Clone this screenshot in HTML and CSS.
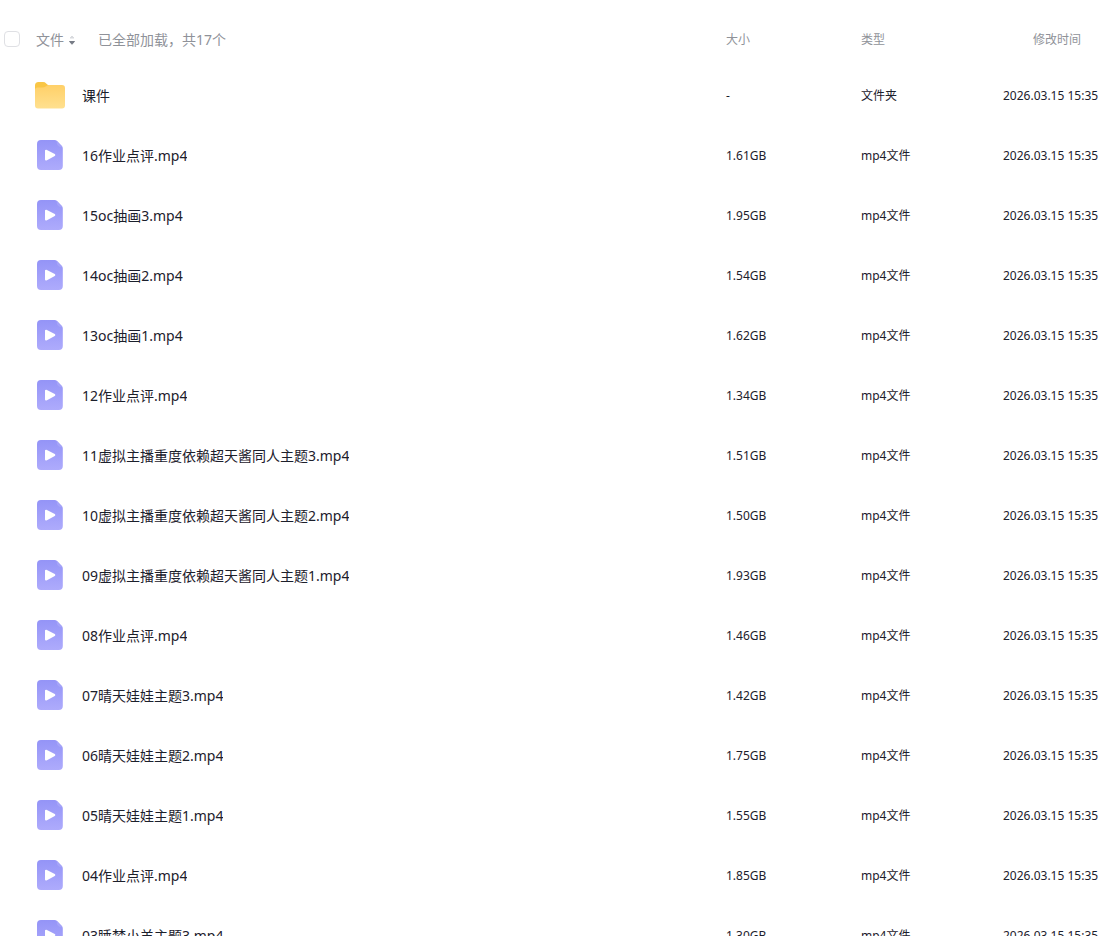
FILE: index.html
```
<!DOCTYPE html>
<html lang="zh-CN">
<head>
<meta charset="utf-8">
<title>文件</title>
<link rel="stylesheet" href="styles.css">
</head>
<body>
<svg width="0" height="0" class="sprites" aria-hidden="true">
  <defs>
    <linearGradient id="violet" x1="0" y1="0" x2="0" y2="1"><stop offset="0" stop-color="#9494f7"/><stop offset="1" stop-color="#aeabfc"/></linearGradient>
    <linearGradient id="amber" x1="0" y1="0" x2="0" y2="1"><stop offset="0" stop-color="#ffd068"/><stop offset="1" stop-color="#ffe08f"/></linearGradient>
    <symbol id="video" viewBox="0 0 30 32">
      <path d="M6 0h13.500q1.500 0 2.500 1l4.800 5q1 1 1 2.500V26a4 4 0 0 1-4 4H6a4 4 0 0 1-4-4V4a4 4 0 0 1 4-4z" fill="url(#violet)"/>
      <path d="M21.500 .6 26.800 6q.6.700.8 1.300-3.200 0-4.600-1.600T21.500 .6z" fill="#a5a4f8"/>
      <path d="M11 10.700v8.800L19.300 15z" fill="#fff" stroke="#fff" stroke-width="2" stroke-linejoin="round"/>
    </symbol>
    <symbol id="folder" viewBox="0 0 30 32">
      <path d="M0 13V5.500Q0 2 3.500 2H8q2 0 3.200 1.400T14.500 5.500V9z" fill="#f9c646"/>
      <path d="M0 10Q0 7.500 2.500 7.500H7q2.500 0 4-1.200T15 5h12q3 0 3 3v17.500q0 3-3 3H3q-3 0-3-3z" fill="url(#amber)"/>
    </symbol>
  </defs>
</svg>
<main class="list">
<table class="files">
<colgroup><col><col class="col-size"><col class="col-type"><col class="col-date"></colgroup>
<thead>
<tr>
<th scope="col"><div class="heading">
<input type="checkbox" class="check" aria-label="全选">
<button type="button" class="sort">文件<svg class="arrows" viewBox="0 0 8 12" aria-hidden="true"><path d="M2 4 4 2l2 2z" fill="#d8dade" stroke="#d8dade" stroke-linejoin="round"/><path d="M1.500 7.500h5L4 10.300z" fill="#777c86" stroke="#777c86" stroke-linejoin="round"/></svg></button>
<span>已全部加载，共17个</span>
</div></th>
<th scope="col">大小</th><th scope="col">类型</th><th scope="col" class="modified">修改时间</th>
</tr>
</thead>
<tbody>
<tr><td><div class="name"><svg class="icon" aria-hidden="true"><use href="#folder"/></svg><a href="#">课件</a></div></td><td>-</td><td>文件夹</td><td>2026.03.15 15:35</td></tr>
<tr><td><div class="name"><svg class="icon" aria-hidden="true"><use href="#video"/></svg><a href="#">16作业点评.mp4</a></div></td><td>1.61GB</td><td>mp4文件</td><td>2026.03.15 15:35</td></tr>
<tr><td><div class="name"><svg class="icon" aria-hidden="true"><use href="#video"/></svg><a href="#">15oc抽画3.mp4</a></div></td><td>1.95GB</td><td>mp4文件</td><td>2026.03.15 15:35</td></tr>
<tr><td><div class="name"><svg class="icon" aria-hidden="true"><use href="#video"/></svg><a href="#">14oc抽画2.mp4</a></div></td><td>1.54GB</td><td>mp4文件</td><td>2026.03.15 15:35</td></tr>
<tr><td><div class="name"><svg class="icon" aria-hidden="true"><use href="#video"/></svg><a href="#">13oc抽画1.mp4</a></div></td><td>1.62GB</td><td>mp4文件</td><td>2026.03.15 15:35</td></tr>
<tr><td><div class="name"><svg class="icon" aria-hidden="true"><use href="#video"/></svg><a href="#">12作业点评.mp4</a></div></td><td>1.34GB</td><td>mp4文件</td><td>2026.03.15 15:35</td></tr>
<tr><td><div class="name"><svg class="icon" aria-hidden="true"><use href="#video"/></svg><a href="#">11虚拟主播重度依赖超天酱同人主题3.mp4</a></div></td><td>1.51GB</td><td>mp4文件</td><td>2026.03.15 15:35</td></tr>
<tr><td><div class="name"><svg class="icon" aria-hidden="true"><use href="#video"/></svg><a href="#">10虚拟主播重度依赖超天酱同人主题2.mp4</a></div></td><td>1.50GB</td><td>mp4文件</td><td>2026.03.15 15:35</td></tr>
<tr><td><div class="name"><svg class="icon" aria-hidden="true"><use href="#video"/></svg><a href="#">09虚拟主播重度依赖超天酱同人主题1.mp4</a></div></td><td>1.93GB</td><td>mp4文件</td><td>2026.03.15 15:35</td></tr>
<tr><td><div class="name"><svg class="icon" aria-hidden="true"><use href="#video"/></svg><a href="#">08作业点评.mp4</a></div></td><td>1.46GB</td><td>mp4文件</td><td>2026.03.15 15:35</td></tr>
<tr><td><div class="name"><svg class="icon" aria-hidden="true"><use href="#video"/></svg><a href="#">07晴天娃娃主题3.mp4</a></div></td><td>1.42GB</td><td>mp4文件</td><td>2026.03.15 15:35</td></tr>
<tr><td><div class="name"><svg class="icon" aria-hidden="true"><use href="#video"/></svg><a href="#">06晴天娃娃主题2.mp4</a></div></td><td>1.75GB</td><td>mp4文件</td><td>2026.03.15 15:35</td></tr>
<tr><td><div class="name"><svg class="icon" aria-hidden="true"><use href="#video"/></svg><a href="#">05晴天娃娃主题1.mp4</a></div></td><td>1.55GB</td><td>mp4文件</td><td>2026.03.15 15:35</td></tr>
<tr><td><div class="name"><svg class="icon" aria-hidden="true"><use href="#video"/></svg><a href="#">04作业点评.mp4</a></div></td><td>1.85GB</td><td>mp4文件</td><td>2026.03.15 15:35</td></tr>
<tr><td><div class="name"><svg class="icon" aria-hidden="true"><use href="#video"/></svg><a href="#">03睡梦小羊主题3.mp4</a></div></td><td>1.30GB</td><td>mp4文件</td><td>2026.03.15 15:35</td></tr>
</tbody>
</table>
</main>
</body>
</html>
```
FILE: styles.css
```
* { box-sizing: border-box; }
body {
  margin: 0;
  background: #fff;
  color: #1c202c;
  font-family: "Noto Sans", "Noto Sans CJK SC", sans-serif;
  font-size: 12px;
  line-height: 20px;
}
.sprites { display: block; }
.list { height: 100vh; overflow: hidden; padding-top: 14px; }
.files { width: 100%; border-collapse: collapse; table-layout: fixed; }
.col-size { width: 135px; }
.col-type { width: 142px; }
.col-date { width: 107px; }
th, td { padding: 0; text-align: left; vertical-align: middle; white-space: nowrap; }
th { height: 52px; color: #8f9299; font-weight: 400; }
td { height: 60px; }
.modified { padding-left: 30px; }
.heading { display: flex; align-items: center; padding-left: 4px; font-size: 14px; }
.check {
  appearance: none;
  width: 16px;
  height: 16px;
  margin: 0 16px 2px 0;
  border: 1px solid #dfe0e4;
  border-radius: 4px;
  background: #fff;
}
.sort {
  display: flex;
  align-items: center;
  gap: 4px;
  margin-right: 22px;
  padding: 0;
  border: 0;
  background: none;
  color: inherit;
  font: inherit;
}
.arrows { width: 8px; height: 12px; }
.name { display: flex; align-items: center; gap: 17px; padding-left: 35px; font-size: 14px; }
.icon { width: 30px; height: 32px; flex: none; }
.name a { overflow: hidden; color: inherit; text-decoration: none; text-overflow: ellipsis; }
```
